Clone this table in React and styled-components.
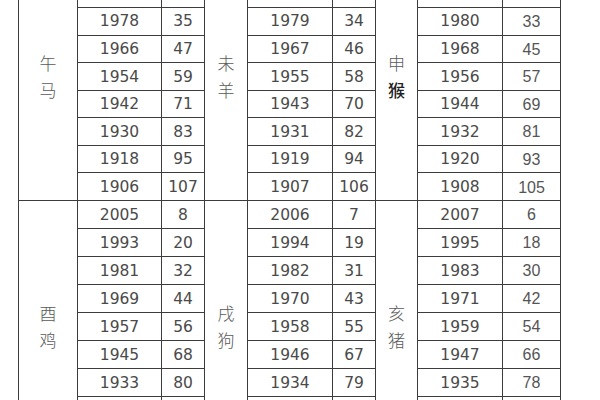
import React from "react";
import styled, { createGlobalStyle } from "styled-components";

const Global = createGlobalStyle`
  html, body { margin: 0; padding: 0; background: #fff; }
  body { width: 600px; height: 400px; overflow: hidden; }
`;

const Page = styled.div`
  width: 600px;
  height: 400px;
  overflow: hidden;
  background: #fff;
`;

const Table = styled.table`
  border-collapse: collapse;
  table-layout: fixed;
  width: 542px;
  margin: -48.2px 0 0 18px;
  color: #4a4a4a;
  font-family: "DejaVu Sans", Verdana, sans-serif;
  font-size: 15px;
`;

const Row = styled.tr`
  height: ${(p) => p.$h}px;
`;

const Cell = styled.td`
  border: 1px solid #3c3c3c;
  padding: 2px 0 0;
  text-align: center;
  vertical-align: middle;
  line-height: 1;
  font-family: ${(p) =>
    p.$narrow ? '"Liberation Sans", Arial, sans-serif' : '"DejaVu Sans", Verdana, sans-serif'};
  font-size: ${(p) => (p.$narrow ? "16px" : "15.5px")};
  color: ${(p) => (p.$narrow ? "#555" : "#4a4a4a")};
`;

const Label = styled.td`
  border: 1px solid #3c3c3c;
  padding: 0;
  text-align: center;
  vertical-align: middle;
  font-family: "Noto Sans CJK SC", "Noto Sans", sans-serif;
  font-size: 17px;
  font-weight: 300;
  line-height: 27px;
  color: #5a5a5a;
`;

const Dark = styled.span`
  color: #222;
  font-weight: 500;
`;

const widths = [59, 84, 43, 43, 85, 43, 42, 85, 58];

const groups = [
  {
    h: 27.57,
    labels: [["午", "马"], ["未", "羊"], ["申", "猴"]],
    starts: [2002, 2003, 2004],
  },
  {
    h: 28,
    labels: [["酉", "鸡"], ["戌", "狗"], ["亥", "猪"]],
    starts: [2005, 2006, 2007],
  },
];

const CUR = 2012;

export default function App() {
  return (
    <Page>
      <Global />
      <Table>
        <colgroup>
          {widths.map((w, i) => (
            <col key={i} style={{ width: w }} />
          ))}
        </colgroup>
        <tbody>
          {groups.map((g, gi) =>
            Array.from({ length: 9 }).map((_, r) => (
              <Row key={`${gi}-${r}`} $h={g.h}>
                {g.starts.map((s, k) => {
                  const y = s - r * 12;
                  const age = CUR - y + 1;
                  return (
                    <React.Fragment key={k}>
                      {r === 0 && (
                        <Label rowSpan={9}>
                          {g.labels[k][0]}
                          <br />
                          {g.labels[k][1] === "猴" ? <Dark>猴</Dark> : g.labels[k][1]}
                        </Label>
                      )}
                      <Cell>{y}</Cell>
                      <Cell $narrow={k === 2}>{age}</Cell>
                    </React.Fragment>
                  );
                })}
              </Row>
            ))
          )}
        </tbody>
      </Table>
    </Page>
  );
}
